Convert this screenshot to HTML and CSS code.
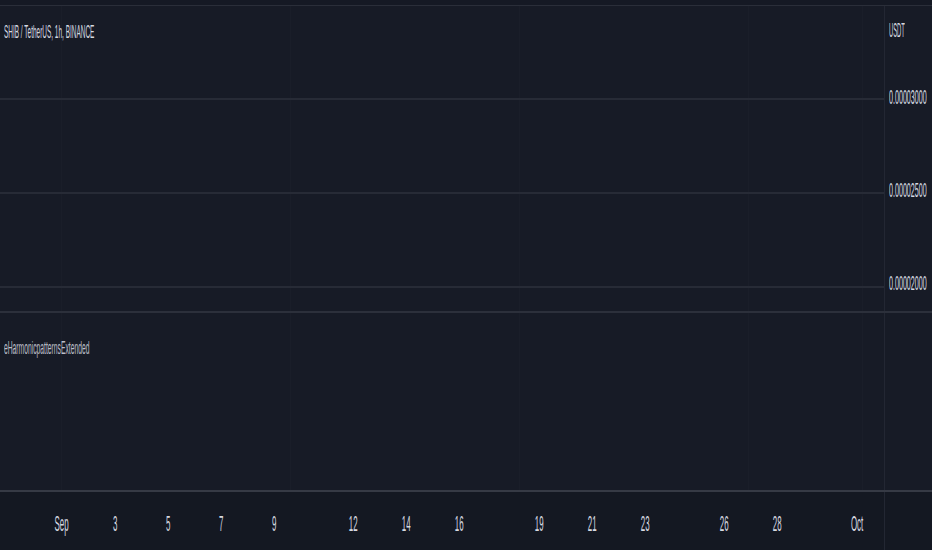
FILE: index.html
```html
<!DOCTYPE html>
<html lang="en">
<head>
  <meta charset="UTF-8">
  <meta name="viewport" content="width=device-width, initial-scale=1.0">
  <title>SHIB / TetherUS chart</title>
  <link rel="stylesheet" href="styles.css">
</head>
<body>
  <div class="chart">
    <div class="top-edge"></div>

    <!-- Main price pane -->
    <div class="pane-row main-row">
      <div class="pane main-pane">
        <div class="legend">
          <span class="sq title">SHIB / TetherUS, 1h, BINANCE</span>
        </div>
      </div>
      <div class="price-axis">
        <div class="currency"><span class="sq">USDT</span></div>
        <div class="prices">
          <div class="price"><span class="sq">0.00003000</span></div>
          <div class="price"><span class="sq">0.00002500</span></div>
          <div class="price"><span class="sq">0.00002000</span></div>
        </div>
      </div>
    </div>

    <!-- Indicator pane -->
    <div class="pane-row ind-row">
      <div class="pane ind-pane">
        <div class="legend ind-legend">
          <span class="sq ind-title">eHarmonicpatternsExtended</span>
        </div>
      </div>
      <div class="price-axis"></div>
    </div>

    <!-- Time axis -->
    <div class="time-row">
      <div class="ticks">
        <div class="tick"><span class="sq">Sep</span></div>
        <div class="tick"></div>
        <div class="tick"><span class="sq">3</span></div>
        <div class="tick"></div>
        <div class="tick"><span class="sq">5</span></div>
        <div class="tick"></div>
        <div class="tick"><span class="sq">7</span></div>
        <div class="tick"></div>
        <div class="tick"><span class="sq">9</span></div>
        <div class="tick"></div>
        <div class="tick"></div>
        <div class="tick"><span class="sq">12</span></div>
        <div class="tick"></div>
        <div class="tick"><span class="sq">14</span></div>
        <div class="tick"></div>
        <div class="tick"><span class="sq">16</span></div>
        <div class="tick"></div>
        <div class="tick"></div>
        <div class="tick"><span class="sq">19</span></div>
        <div class="tick"></div>
        <div class="tick"><span class="sq">21</span></div>
        <div class="tick"></div>
        <div class="tick"><span class="sq">23</span></div>
        <div class="tick"></div>
        <div class="tick"></div>
        <div class="tick"><span class="sq">26</span></div>
        <div class="tick"></div>
        <div class="tick"><span class="sq">28</span></div>
        <div class="tick"></div>
        <div class="tick"></div>
        <div class="tick"><span class="sq">Oct</span></div>
      </div>
      <div class="axis-corner"></div>
    </div>
  </div>
</body>
</html>
```

FILE: styles.css
```css
/* Dark chart layout, squeezed labels */
body {
  margin: 0;
  background-color: #171b26;
  font-family: "Liberation Sans", Arial, sans-serif;
  color: #d6d9e0;
}
.chart {
  width: 932px;
  height: 550px;
  display: flex;
  flex-direction: column;
  overflow: hidden;
}
.top-edge {
  height: 5px;
  background-color: #151924;
}
.sq {
  display: inline-block;
  white-space: nowrap;
  transform: scaleX(0.36);
  transform-origin: left center;
}
.pane-row {
  display: flex;
}
.main-row {
  height: 305px;
  border-top: 1px solid #2a2e39;
  border-bottom: 2px solid #2c303b;
}
.ind-row {
  height: 177px;
  border-bottom: 2px solid #363a45;
}
.pane {
  width: 884px;
  flex-shrink: 0;
  background-image: repeating-linear-gradient(to right, transparent 0 61px, #1a1e29 61px 62px, transparent 62px 114.5px);
}
.main-pane {
  background-image:
    repeating-linear-gradient(to bottom, transparent 0 92px, #272b36 92px 94px, transparent 94px 93px),
    repeating-linear-gradient(to right, transparent 0 61px, #1a1e29 61px 62px, transparent 62px 114.5px);
  background-size: 100% 282px, 100% 100%;
  background-repeat: no-repeat, repeat;
}
.ind-pane {
  background-color: #171b26;
}
.legend {
  padding: 15px 0 0 4px;
  font-size: 19px;
  line-height: 22px;
}
.title {
  transform: scaleX(0.34);
}
.ind-legend {
  padding-top: 24px;
}
.ind-title {
  color: #bcbfc8;
  transform: scaleX(0.355);
}
.price-axis {
  flex: 1;
  border-left: 1px solid #232733;
  padding-left: 4px;
}
.currency {
  margin-top: 14px;
  height: 20px;
  font-size: 20px;
  line-height: 20px;
}
.currency .sq {
  transform: scaleX(0.29);
}
.prices {
  margin-top: 46px;
  display: flex;
  flex-direction: column;
  gap: 71px;
}
.price {
  height: 22px;
  font-size: 21px;
  line-height: 22px;
}
.price .sq {
  transform: scaleX(0.34);
}
.time-row {
  flex: 1;
  display: flex;
  background-color: #141822;
}
.ticks {
  width: 884px;
  flex-shrink: 0;
  box-sizing: border-box;
  padding: 19px 0 0 48.75px;
  display: grid;
  grid-template-columns: repeat(31, 26.5px);
  align-items: start;
}
.tick {
  display: flex;
  justify-content: center;
  font-size: 22px;
  line-height: 26px;
  height: 26px;
}
.tick .sq {
  flex-shrink: 0;
  transform: scaleX(0.36);
  transform-origin: center center;
}
.axis-corner {
  flex: 1;
  border-left: 1px solid #232733;
}
```
